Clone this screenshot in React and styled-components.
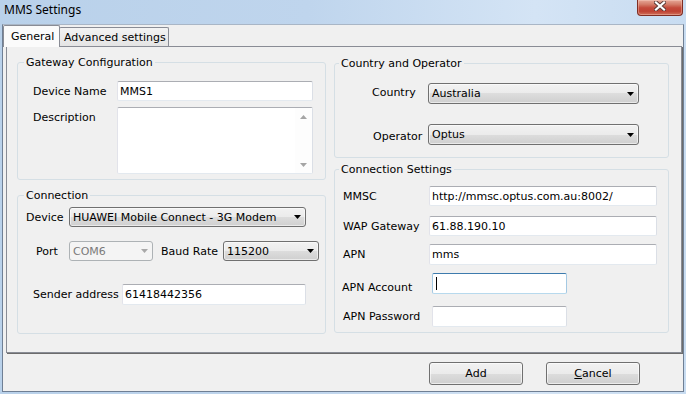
import React from 'react';
import styled, { createGlobalStyle } from 'styled-components';

const Global = createGlobalStyle`
  html, body { margin: 0; padding: 0; width: 686px; height: 394px; overflow: hidden; background: #c4d8ee; }
  #root { width: 686px; height: 394px; }
`;

const UI = `"DejaVu Sans", Tahoma, Verdana, sans-serif`;

const Window = styled.div`
  width: 686px;
  height: 394px;
  box-sizing: border-box;
  display: flex;
  flex-direction: column;
  padding: 0 2px 2px 2px;
  background: linear-gradient(90deg, #b9d1ea 0%, #bfd5ed 45%, #d4e4f5 78%, #c8dcf1 100%);
  font-family: ${UI};
  font-size: 11px;
  color: #000;
`;

const TitleBar = styled.div`
  height: 24px;
  flex: none;
  display: flex;
  justify-content: space-between;
  align-items: flex-start;
`;

const Title = styled.div`
  font-family: "Noto Sans", "Open Sans", sans-serif;
  font-size: 12px;
  line-height: 16px;
  padding: 2px 0 0 2px;
`;

const CloseButton = styled.div`
  width: 46px;
  height: 16px;
  box-sizing: border-box;
  margin-right: 1px;
  border: 1px solid #7f2d23;
  border-top: none;
  border-radius: 0 0 4px 4px;
  background: linear-gradient(#e6a898 0%, #d37b68 30%, #c44a3b 52%, #bf4233 75%, #d0705a 100%);
  box-shadow: inset 0 0 0 1px rgba(255, 220, 210, 0.35);
  display: flex;
  justify-content: center;
  padding-top: 1px;
`;

const Client = styled.div`
  flex: 1;
  display: flex;
  flex-direction: column;
  background: #f0f0f0;
  border: 1px solid #6f7f94;
  border-top-color: #a9b6c6;
`;

const TabArea = styled.div`
  height: 328px;
  flex: none;
  display: flex;
  flex-direction: column;
`;

const TabStrip = styled.div`
  height: 22px;
  display: flex;
  align-items: flex-end;
`;

const Tab = styled.div`
  box-sizing: border-box;
  height: ${p => (p.$active ? 22 : 19)}px;
  width: ${p => p.$w}px;
  margin-left: ${p => (p.$active ? 0 : -1)}px;
  margin-bottom: ${p => (p.$active ? 0 : 1)}px;
  padding-left: ${p => p.$pad}px;
  border: 1px solid #898c95;
  border-bottom: none;
  border-radius: 2px 2px 0 0;
  background: ${p => (p.$active ? '#fbfbfb' : 'linear-gradient(#f3f3f3, #e4e4e4)')};
  display: flex;
  align-items: center;
  white-space: nowrap;
  position: ${p => (p.$active ? 'relative' : 'static')};
  z-index: ${p => (p.$active ? 1 : 'auto')};
`;

const TabPage = styled.div`
  flex: 1;
  margin: -1px 1px 0 3px;
  box-sizing: border-box;
  border: 1px solid #898c95;
  box-shadow: 1px 1px 0 #6c6c6c;
  padding: 9px 0 0 10px;
  display: grid;
  grid-template-columns: 309px 335px;
  column-gap: 8px;
  align-items: start;
`;

const Column = styled.div`
  display: flex;
  flex-direction: column;
  gap: ${p => p.$gap}px;
  padding-top: ${p => p.$pt || 0}px;
`;

const GroupBox = styled.fieldset`
  margin: 0;
  padding: 0;
  min-width: 0;
  box-sizing: border-box;
  height: ${p => p.$h}px;
  border: 1px solid #d5dfe5;
  border-radius: 3px;
`;

const Legend = styled.legend`
  padding: 0 2px;
  margin-left: ${p => p.$off}px;
  line-height: 13px;
  font-size: 11px;
`;

const Body = styled.div`
  padding-top: ${p => p.$pt}px;
`;

const Row = styled.div`
  display: flex;
  align-items: ${p => (p.$top ? 'flex-start' : 'center')};
  margin-top: ${p => p.$mt || 0}px;
  padding-left: ${p => p.$indent || 0}px;
`;

const Label = styled.span`
  flex: none;
  width: ${p => p.$w}px;
  margin-left: ${p => p.$ml || 0}px;
  margin-top: ${p => p.$dy || 0}px;
  line-height: 13px;
  white-space: nowrap;
`;

const TextBox = styled.div`
  flex: none;
  width: ${p => p.$w}px;
  height: ${p => p.$h || 20}px;
  box-sizing: border-box;
  background: #fff;
  border: 1px solid;
  border-color: ${p => (p.$focus ? '#3d7bad #a4c9e3 #b7d9ed #a4c9e3' : '#abadb3 #dbdfe6 #e3e9ef #e2e3ea')};
  border-radius: 2px;
  display: flex;
  align-items: center;
  padding-left: 2px;
  white-space: nowrap;
  overflow: hidden;
`;

const Caret = styled.span`
  width: 1px;
  height: 13px;
  margin-left: 1px;
  background: #000;
`;

const TextArea = styled.div`
  flex: none;
  width: ${p => p.$w}px;
  height: ${p => p.$h}px;
  box-sizing: border-box;
  background: #fff;
  border: 1px solid;
  border-color: #abadb3 #dbdfe6 #e3e9ef #e2e3ea;
  border-radius: 2px;
  display: flex;
  justify-content: flex-end;
`;

const ScrollBar = styled.div`
  width: 17px;
  display: flex;
  flex-direction: column;
  justify-content: space-between;
  background: #fdfdfd;
`;

const ScrollButton = styled.div`
  height: 17px;
  display: flex;
  align-items: center;
  justify-content: center;
`;

const ComboBox = styled.div`
  flex: none;
  width: ${p => p.$w}px;
  height: ${p => p.$h || 20}px;
  box-sizing: border-box;
  border: 1px solid ${p => (p.$disabled ? '#adb2b5' : '#707070')};
  border-radius: 3px;
  background: ${p =>
    p.$disabled ? '#f4f4f4' : 'linear-gradient(#f2f2f2 0%, #ebebeb 50%, #dddddd 50%, #cfcfcf 100%)'};
  box-shadow: ${p => (p.$disabled ? 'none' : 'inset 0 0 0 1px rgba(255,255,255,0.55)')};
  color: ${p => (p.$disabled ? '#7a7a7a' : '#000')};
  display: flex;
  align-items: center;
  justify-content: space-between;
  padding: 0 4px 0 3px;
  white-space: nowrap;
`;

const BottomBar = styled.div`
  flex: 1;
  display: flex;
  justify-content: flex-end;
  align-items: flex-start;
  gap: 23px;
  padding: 9px 43px 0 0;
`;

const Button = styled.div`
  width: 94px;
  height: 23px;
  box-sizing: border-box;
  border: 1px solid #707070;
  border-radius: 3px;
  background: linear-gradient(#f2f2f2 0%, #ebebeb 50%, #dddddd 50%, #cfcfcf 100%);
  box-shadow: inset 0 0 0 1px rgba(255, 255, 255, 0.6);
  display: flex;
  align-items: center;
  justify-content: center;
`;

const Mnemonic = styled.span`
  text-decoration: underline;
`;

const Arrow = ({ color = '#000', up = false }) => (
  <svg width="7" height="4" viewBox="0 0 7 4">
    <polygon points={up ? '0,4 7,4 3.5,0' : '0,0 7,0 3.5,4'} fill={color} />
  </svg>
);

const CloseX = () => (
  <svg width="12" height="10" viewBox="0 0 12 10">
    <path d="M2 1.5 L10 8.5 M10 1.5 L2 8.5" stroke="#5a3a36" strokeWidth="4" strokeLinecap="square" />
    <path d="M2 1.5 L10 8.5 M10 1.5 L2 8.5" stroke="#ffffff" strokeWidth="2.2" strokeLinecap="square" />
  </svg>
);

const Combo = ({ w, h, disabled, children }) => (
  <ComboBox $w={w} $h={h} $disabled={disabled}>
    <span>{children}</span>
    <Arrow color={disabled ? '#a8a8a8' : '#000'} />
  </ComboBox>
);

export default function App() {
  return (
    <>
      <Global />
      <Window>
        <TitleBar>
          <Title>MMS Settings</Title>
          <CloseButton>
            <CloseX />
          </CloseButton>
        </TitleBar>
        <Client>
          <TabArea>
            <TabStrip>
              <Tab $active $w={57} $pad={7}>General</Tab>
              <Tab $w={110} $pad={4}>Advanced settings</Tab>
            </TabStrip>
            <TabPage>
              <Column $gap={9}>
                <GroupBox $h={124}>
                  <Legend $off={6}>Gateway Configuration</Legend>
                  <Body $pt={12}>
                    <Row $indent={15}>
                      <Label $w={84}>Device Name</Label>
                      <TextBox $w={196}>MMS1</TextBox>
                    </Row>
                    <Row $indent={15} $mt={6} $top>
                      <Label $w={84} $dy={4}>Description</Label>
                      <TextArea $w={196} $h={67}>
                        <ScrollBar>
                          <ScrollButton><Arrow up color="#a5a5a5" /></ScrollButton>
                          <ScrollButton><Arrow color="#a5a5a5" /></ScrollButton>
                        </ScrollBar>
                      </TextArea>
                    </Row>
                  </Body>
                </GroupBox>
                <GroupBox $h={145}>
                  <Legend $off={6}>Connection</Legend>
                  <Body $pt={5}>
                    <Row $indent={8}>
                      <Label $w={43}>Device</Label>
                      <Combo w={237}>HUAWEI Mobile Connect - 3G Modem</Combo>
                    </Row>
                    <Row $indent={18} $mt={14}>
                      <Label $w={33}>Port</Label>
                      <Combo w={84} disabled>COM6</Combo>
                      <Label $w={62} $ml={8}>Baud Rate</Label>
                      <Combo w={96}>115200</Combo>
                    </Row>
                    <Row $indent={15} $mt={23}>
                      <Label $w={89}>Sender address</Label>
                      <TextBox $w={184} $h={21}>61418442356</TextBox>
                    </Row>
                  </Body>
                </GroupBox>
              </Column>
              <Column $gap={5} $pt={1}>
                <GroupBox $h={101}>
                  <Legend $off={4}>Country and Operator</Legend>
                  <Body $pt={13}>
                    <Row $indent={37} $top>
                      <Label $w={56} $dy={3}>Country</Label>
                      <Combo w={211} h={21}>Australia</Combo>
                    </Row>
                    <Row $indent={38} $mt={20} $top>
                      <Label $w={55} $dy={6}>Operator</Label>
                      <Combo w={211} h={21}>Optus</Combo>
                    </Row>
                  </Body>
                </GroupBox>
                <GroupBox $h={170}>
                  <Legend $off={4}>Connection Settings</Legend>
                  <Body $pt={10}>
                    <Row $indent={8}>
                      <Label $w={86}>MMSC</Label>
                      <TextBox $w={228}>http://mmsc.optus.com.au:8002/</TextBox>
                    </Row>
                    <Row $indent={8} $mt={10}>
                      <Label $w={86}>WAP Gateway</Label>
                      <TextBox $w={228}>61.88.190.10</TextBox>
                    </Row>
                    <Row $indent={8} $mt={8}>
                      <Label $w={86}>APN</Label>
                      <TextBox $w={228} $h={21}>mms</TextBox>
                    </Row>
                    <Row $indent={7} $mt={8} $top>
                      <Label $w={90} $dy={8}>APN Account</Label>
                      <TextBox $w={135} $h={21} $focus>
                        <Caret />
                      </TextBox>
                    </Row>
                    <Row $indent={8} $mt={12}>
                      <Label $w={89}>APN Password</Label>
                      <TextBox $w={135} $h={21} />
                    </Row>
                  </Body>
                </GroupBox>
              </Column>
            </TabPage>
          </TabArea>
          <BottomBar>
            <Button>Add</Button>
            <Button><span><Mnemonic>C</Mnemonic>ancel</span></Button>
          </BottomBar>
        </Client>
      </Window>
    </>
  );
}
